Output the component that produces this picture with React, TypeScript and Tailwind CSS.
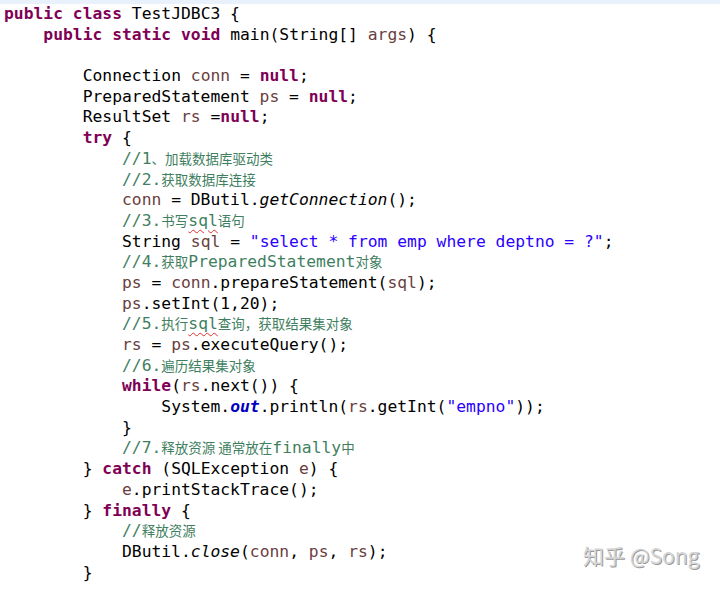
import React from 'react';

type Seg = [string, string];

const MONO = "font-['DejaVu_Sans_Mono','Liberation_Mono',monospace]";

// eclipse default java colours
const styles: Record<string, string> = {
  p: 'text-black',
  k: 'font-bold text-[#7f0055]',
  v: 'text-[#6a3e3e]',
  s: 'text-[#2a00ff]',
  f: 'italic font-bold text-[#0000c0]',
  m: 'italic text-black',
  c: 'text-[#3f7f5f]',
  q: 'text-[#3f7f5f] underline decoration-wavy decoration-[#e03030] decoration-1 underline-offset-[3px]',
};

const lines: { indent: number; segs: Seg[] }[] = [
  { indent: 0, segs: [['k', 'public'], ['p', ' '], ['k', 'class'], ['p', ' TestJDBC3 {']] },
  {
    indent: 1,
    segs: [['k', 'public'], ['p', ' '], ['k', 'static'], ['p', ' '], ['k', 'void'], ['p', ' main(String[] '], ['v', 'args'], ['p', ') {']],
  },
  { indent: 0, segs: [] },
  { indent: 2, segs: [['p', 'Connection '], ['v', 'conn'], ['p', ' = '], ['k', 'null'], ['p', ';']] },
  { indent: 2, segs: [['p', 'PreparedStatement '], ['v', 'ps'], ['p', ' = '], ['k', 'null'], ['p', ';']] },
  { indent: 2, segs: [['p', 'ResultSet '], ['v', 'rs'], ['p', ' ='], ['k', 'null'], ['p', ';']] },
  { indent: 2, segs: [['k', 'try'], ['p', ' {']] },
  { indent: 3, segs: [['c', '//1、加载数据库驱动类']] },
  { indent: 3, segs: [['c', '//2.获取数据库连接']] },
  { indent: 3, segs: [['v', 'conn'], ['p', ' = DButil.'], ['m', 'getConnection'], ['p', '();']] },
  { indent: 3, segs: [['c', '//3.书写'], ['q', 'sql'], ['c', '语句']] },
  { indent: 3, segs: [['p', 'String '], ['v', 'sql'], ['p', ' = '], ['s', '"select * from emp where deptno = ?"'], ['p', ';']] },
  { indent: 3, segs: [['c', '//4.获取PreparedStatement对象']] },
  { indent: 3, segs: [['v', 'ps'], ['p', ' = '], ['v', 'conn'], ['p', '.prepareStatement('], ['v', 'sql'], ['p', ');']] },
  { indent: 3, segs: [['v', 'ps'], ['p', '.setInt(1,20);']] },
  { indent: 3, segs: [['c', '//5.执行'], ['q', 'sql'], ['c', '查询，获取结果集对象']] },
  { indent: 3, segs: [['v', 'rs'], ['p', ' = '], ['v', 'ps'], ['p', '.executeQuery();']] },
  { indent: 3, segs: [['c', '//6.遍历结果集对象']] },
  { indent: 3, segs: [['k', 'while'], ['p', '('], ['v', 'rs'], ['p', '.next()) {']] },
  {
    indent: 4,
    segs: [['p', 'System.'], ['f', 'out'], ['p', '.println('], ['v', 'rs'], ['p', '.getInt('], ['s', '"empno"'], ['p', '));']],
  },
  { indent: 3, segs: [['p', '}']] },
  { indent: 3, segs: [['c', '//7.释放资源 通常放在finally中']] },
  { indent: 2, segs: [['p', '} '], ['k', 'catch'], ['p', ' (SQLException '], ['v', 'e'], ['p', ') {']] },
  { indent: 3, segs: [['v', 'e'], ['p', '.printStackTrace();']] },
  { indent: 2, segs: [['p', '} '], ['k', 'finally'], ['p', ' {']] },
  { indent: 3, segs: [['c', '//释放资源']] },
  {
    indent: 3,
    segs: [['p', 'DButil.'], ['m', 'close'], ['p', '('], ['v', 'conn'], ['p', ', '], ['v', 'ps'], ['p', ', '], ['v', 'rs'], ['p', ');']],
  },
  { indent: 2, segs: [['p', '}']] },
];

// chinese runs render smaller, like the eclipse fallback font
const CJK_RUN = /([\u3000-\u303f\u4e00-\u9fff\uff00-\uffef]+(?: [\u3000-\u303f\u4e00-\u9fff\uff00-\uffef]+)*)/;

const splitCjk = (text: string) => text.split(CJK_RUN).filter(Boolean);

const isCjk = (t: string) => /[\u3000-\u303f\u4e00-\u9fff\uff00-\uffef]/.test(t);

const Segment = ({ seg }: { seg: Seg }) => {
  const [type, text] = seg;
  return (
    <span className={styles[type]}>
      {splitCjk(text).map((part, i) =>
        isCjk(part) ? (
          <span
            key={i}
            className="font-['Noto_Sans_CJK_SC',sans-serif] text-[13.5px] leading-none font-normal not-italic"
          >
            {part}
          </span>
        ) : (
          <span key={i}>{part}</span>
        )
      )}
    </span>
  );
};

export default function App() {
  return (
    <div className="relative w-[720px] h-[589px] overflow-hidden bg-white">
      <div className="h-[4px] bg-[#e8f1fc]" />
      <div className={`${MONO} text-[16.33px] leading-[20.7px] pl-[4px] whitespace-pre`}>
        {lines.map((line, idx) => (
          <div key={idx} className="h-[20.7px]">
            {'    '.repeat(line.indent)}
            {line.segs.map((seg, i) => (
              <Segment key={i} seg={seg} />
            ))}
          </div>
        ))}
      </div>

      {/* watermark */}
      <div className="absolute left-[583px] top-[540px] font-['Noto_Sans_CJK_SC',sans-serif] text-[21px] text-[#d6d6d6] [text-shadow:1px_1px_0_#9a9a9a] whitespace-nowrap">
        知乎 @Song
      </div>
    </div>
  );
}
